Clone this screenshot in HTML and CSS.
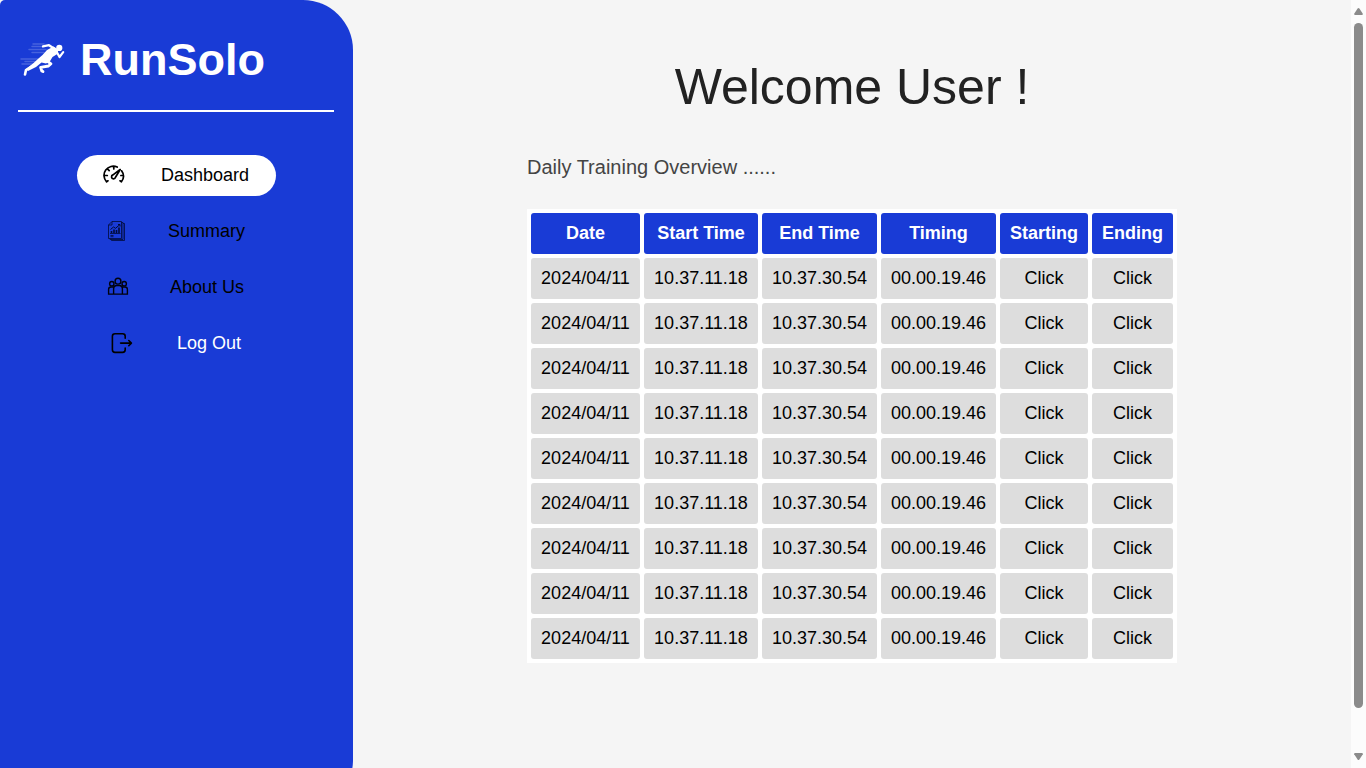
FILE: index.html
```html
<!DOCTYPE html>
<html lang="en">
<head>
<meta charset="utf-8">
<title>RunSolo</title>
<link rel="stylesheet" href="styles.css">
</head>
<body>
<div class="app">
  <aside class="sidebar">
    <div class="brand">
      <svg class="logo" viewBox="0 0 46 36" width="46" height="36">
        <g stroke="#fff" fill="none" stroke-linecap="round" stroke-linejoin="round">
          <path d="M13 3H24M12 5.5H22M9 8.5H26M12 11.5H24M1 18H19M5 20.5H17M2 23H13" stroke-width="1.5" opacity=".2"/>
          <path d="M34 7.5L29 4.2L23 5.4" stroke-width="2.3"/>
          <path d="M36.5 10.5L39.5 16L43.2 11.2" stroke-width="2.2"/>
          <path d="M25 18.5L31 22.8L28.5 25L20.6 26.3L21.8 30L23 30.6" stroke-width="2.8"/>
          <path d="M14 24L6 29L5 33.5" stroke-width="2.6"/>
        </g>
        <path fill="#fff" d="M33.5 5.5L38.5 8.5L37.3 13L32.5 16L29.8 20.5L26 22.5L21.5 21.5L16 26L8 30L6 28L13 22.5L18.5 17.5L22.5 14L27 9Z"/>
        <circle cx="39.3" cy="6.9" r="3.1" fill="#fff"/>
      </svg>
      <span class="brand-name">RunSolo</span>
    </div>
    <nav class="menu">
      <a class="item active">
        <svg width="22" height="22" viewBox="0 0 22 22" fill="none" stroke="#000" stroke-width="1.7" stroke-linecap="round">
          <path d="M3.6 17.8A9.2 9.2 0 0 1 14.2 3.1M18.6 6.8A9.2 9.2 0 0 1 18.4 17.8M10.8 2.7V5M4.9 5.3L6.2 6.6M2 11.5H4.3M17.9 11.5H20M3.6 17.8L5 16.8M18.4 17.8L17 16.8"/>
          <path d="M17.2 5.5L10 10.9A2 2 0 1 0 12.5 13.2Z" stroke-linejoin="round"/>
        </svg>
        <span>Dashboard</span>
      </a>
      <a class="item summary">
        <svg width="22" height="22" viewBox="0 0 22 22" fill="none" stroke="#000a38" stroke-width=".8">
          <path d="M6 1.5H15.5V18.5H2.5V5ZM2.5 5H6V1.5M15.5 2.5H17V19.5H4V18.5M17 3.5H18.5V20.5H5.5V19.5"/>
          <path d="M4.5 9.5L7.5 7L9.5 8.3L14 4.5M12 4.5H14V6.5" stroke-width="1"/>
          <path d="M5.5 13V11M8 13V9.5M10.5 13V10M13 13V7.5" stroke-width="1.6"/>
          <path d="M4 13.5H14.5M4.5 15.5H7.5M4.5 16.7H7.5"/>
        </svg>
        <span>Summary</span>
      </a>
      <a class="item about">
        <svg width="22" height="22" viewBox="0 0 22 22" fill="none" stroke="#00020d" stroke-width="1.4">
          <circle cx="11" cy="5.2" r="2.9"/><circle cx="4.8" cy="7.7" r="2.2"/><circle cx="17.2" cy="7.7" r="2.2"/>
          <path d="M6.6 18.1V12.7Q6.6 9.5 9.5 9.5H12.5Q15.4 9.5 15.4 12.7V18.1ZM6.6 18.1H1.6V13.5Q1.6 11 4 11H6.5M15.4 18.1H20.4V13.5Q20.4 11 18 11H15.5"/>
        </svg>
        <span>About Us</span>
      </a>
      <a class="item logout">
        <svg width="22" height="22" viewBox="0 0 22 22" fill="none" stroke="#000" stroke-width="1.6" stroke-linecap="round" stroke-linejoin="round">
          <path d="M14.2 6.2V4.2Q14.2 1.7 11.6 1.7H4Q1.4 1.7 1.4 4.2V17.8Q1.4 20.4 4 20.4H11.6Q14.2 20.4 14.2 17.8V16M9.6 11.1H20.4M17.8 8.5L20.4 11.1L17.8 13.7"/>
        </svg>
        <span>Log Out</span>
      </a>
    </nav>
  </aside>
  <main class="main">
    <h1 class="title">Welcome User !</h1>
    <section class="overview">
      <p class="subtitle">Daily Training Overview ......</p>
      <table class="runs">
        <colgroup><col class="c-date"><col class="c-start"><col class="c-time"><col class="c-time"><col class="c-starting"><col class="c-ending"></colgroup>
        <thead><tr><th>Date</th><th>Start Time</th><th>End Time</th><th>Timing</th><th>Starting</th><th>Ending</th></tr></thead>
        <tbody>
          <tr><td>2024/04/11</td><td>10.37.11.18</td><td>10.37.30.54</td><td>00.00.19.46</td><td>Click</td><td>Click</td></tr>
          <tr><td>2024/04/11</td><td>10.37.11.18</td><td>10.37.30.54</td><td>00.00.19.46</td><td>Click</td><td>Click</td></tr>
          <tr><td>2024/04/11</td><td>10.37.11.18</td><td>10.37.30.54</td><td>00.00.19.46</td><td>Click</td><td>Click</td></tr>
          <tr><td>2024/04/11</td><td>10.37.11.18</td><td>10.37.30.54</td><td>00.00.19.46</td><td>Click</td><td>Click</td></tr>
          <tr><td>2024/04/11</td><td>10.37.11.18</td><td>10.37.30.54</td><td>00.00.19.46</td><td>Click</td><td>Click</td></tr>
          <tr><td>2024/04/11</td><td>10.37.11.18</td><td>10.37.30.54</td><td>00.00.19.46</td><td>Click</td><td>Click</td></tr>
          <tr><td>2024/04/11</td><td>10.37.11.18</td><td>10.37.30.54</td><td>00.00.19.46</td><td>Click</td><td>Click</td></tr>
          <tr><td>2024/04/11</td><td>10.37.11.18</td><td>10.37.30.54</td><td>00.00.19.46</td><td>Click</td><td>Click</td></tr>
          <tr><td>2024/04/11</td><td>10.37.11.18</td><td>10.37.30.54</td><td>00.00.19.46</td><td>Click</td><td>Click</td></tr>
        </tbody>
      </table>
    </section>
  </main>
  <div class="scrollbar">
    <svg width="9" height="7" viewBox="0 0 9 7"><path d="M4.5 0Q5 0 5.4 .6L8.8 5.8Q9 7 8 7H1Q0 7 .2 5.8L3.6 .6Q4 0 4.5 0Z" fill="#8b8b8b"/></svg>
    <div class="thumb"></div>
    <svg width="9" height="7" viewBox="0 0 9 7"><path d="M4.5 7Q5 7 5.4 6.4L8.8 1.2Q9 0 8 0H1Q0 0 .2 1.2L3.6 6.4Q4 7 4.5 7Z" fill="#8b8b8b"/></svg>
  </div>
</div>
</body>
</html>
```
FILE: styles.css
```css
* { box-sizing: border-box; }

body {
  margin: 0;
  overflow: hidden;
  background: #f5f5f5;
  font-family: "Liberation Sans", Arial, sans-serif;
  font-size: 18px;
  color: #000;
}

.app {
  display: flex;
  height: 768px;
  overflow: hidden;
}

.sidebar {
  flex: none;
  width: 353px;
  height: 810px;
  padding: 0 19px 0 18px;
  background: #193bd6;
  border-radius: 5px 50px 50px 5px;
}

.brand {
  display: flex;
  align-items: center;
  height: 112px;
  padding-bottom: 9px;
  border-bottom: 2px solid #fff;
}

.logo { margin: 17px 14px 0 2px; }

.brand-name {
  padding-top: 19px;
  font-size: 45px;
  font-weight: bold;
  line-height: 52px;
  color: #fff;
}

.menu {
  display: flex;
  flex-direction: column;
  align-items: center;
  gap: 15px;
  padding-top: 43px;
}

.item {
  display: flex;
  align-items: center;
  gap: 36px;
  height: 41px;
  width: 199px;
  padding-left: 26.5px;
  border-radius: 21px;
}

.item svg { margin-bottom: 1px; }
.item.active { background: #fff; }
.item.summary { padding-left: 29.5px; gap: 40px; }
.item.about { padding-left: 30.5px; gap: 41px; }
.item.logout { padding-left: 34.5px; gap: 44px; }
.logout span { color: #fff; }

.main {
  flex: 1;
  display: flex;
  flex-direction: column;
  align-items: center;
}

.title {
  margin: 59px 0 0;
  font-size: 50px;
  font-weight: normal;
  line-height: 57px;
  color: #222;
}

.overview { width: 650px; }

.subtitle {
  margin: 40px 0 30px;
  font-size: 20px;
  line-height: 23px;
  color: #444;
}

.runs {
  width: 650px;
  table-layout: fixed;
  border-spacing: 4px;
  background: #fff;
  text-align: center;
}

.c-date { width: 109px; }
.c-start { width: 114px; }
.c-time { width: 115px; }
.c-starting { width: 88px; }
.c-ending { width: 81px; }

.runs th,
.runs td {
  height: 41px;
  padding: 0;
  line-height: 21px;
  border-radius: 3px;
}

.runs th { background: #193bd6; color: #fff; }
.runs td { background: #ddd; }

.scrollbar {
  display: flex;
  flex: none;
  flex-direction: column;
  align-items: center;
  width: 15px;
  padding-top: 8px;
  background: #fcfcfc;
}

.thumb {
  width: 9px;
  height: 685px;
  margin: 8px 0 45px;
  border-radius: 5px;
  background: #8b8b8b;
}
```
